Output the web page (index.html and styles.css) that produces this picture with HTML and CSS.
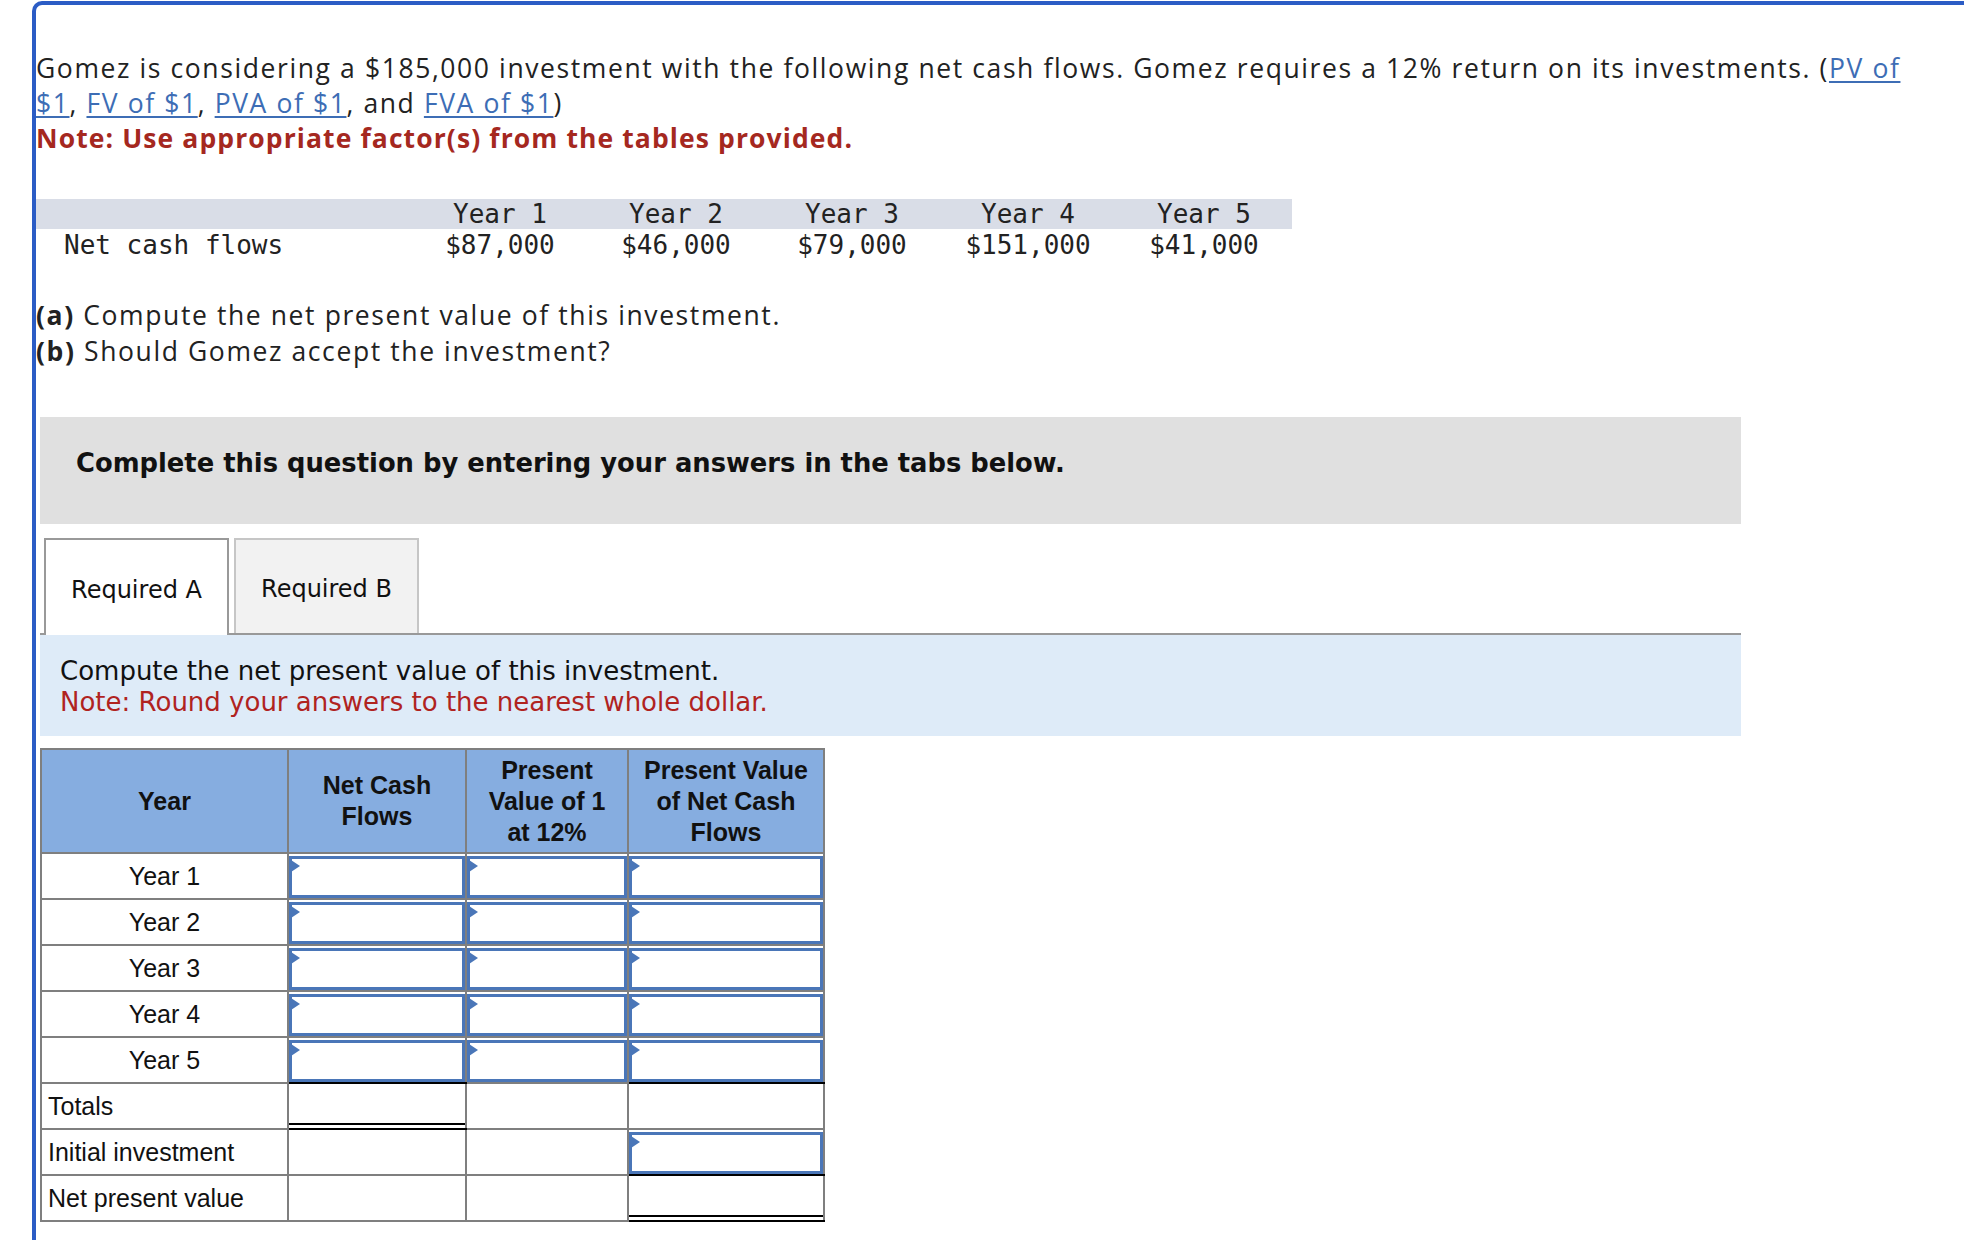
FILE: index.html
```html
<!DOCTYPE html>
<html lang="en">
<head>
<meta charset="utf-8">
<title>Gomez NPV question</title>
<link rel="stylesheet" href="styles.css">
</head>
<body>
<div class="frame">
  <p class="intro">Gomez is considering a $185,000 investment with the following net cash flows. Gomez requires a 12% return on its investments. (<a href="#">PV of</a> <a href="#">$1</a>, <a href="#">FV of $1</a>, <a href="#">PVA of $1</a>, and <a href="#">FVA of $1</a>)<br><span class="note">Note: Use appropriate factor(s) from the tables provided.</span></p>

  <table class="flows">
    <thead>
      <tr><th class="label"></th><th>Year 1</th><th>Year 2</th><th>Year 3</th><th>Year 4</th><th>Year 5</th></tr>
    </thead>
    <tbody>
      <tr><td class="label">Net cash flows</td><td>$87,000</td><td>$46,000</td><td>$79,000</td><td>$151,000</td><td>$41,000</td></tr>
    </tbody>
  </table>

  <p class="parts"><b>(a)</b> Compute the net present value of this investment.<br><b>(b)</b> Should Gomez accept the investment?</p>

  <div class="instructions">Complete this question by entering your answers in the tabs below.</div>

  <div class="tabs">
    <div class="tab active">Required A</div>
    <div class="tab">Required B</div>
  </div>
  <div class="panel-note">
    <div>Compute the net present value of this investment.</div>
    <div class="red">Note: Round your answers to the nearest whole dollar.</div>
  </div>

  <table class="npv">
    <colgroup><col class="c1"><col class="c2"><col class="c3"><col class="c4"></colgroup>
    <thead>
      <tr><th>Year</th><th>Net Cash Flows</th><th>Present Value of 1 at 12%</th><th>Present Value of Net Cash Flows</th></tr>
    </thead>
    <tbody>
      <tr><td class="yr">Year 1</td><td class="in"><div class="box"></div></td><td class="in"><div class="box"></div></td><td class="in"><div class="box"></div></td></tr>
      <tr><td class="yr">Year 2</td><td class="in"><div class="box"></div></td><td class="in"><div class="box"></div></td><td class="in"><div class="box"></div></td></tr>
      <tr><td class="yr">Year 3</td><td class="in"><div class="box"></div></td><td class="in"><div class="box"></div></td><td class="in"><div class="box"></div></td></tr>
      <tr><td class="yr">Year 4</td><td class="in"><div class="box"></div></td><td class="in"><div class="box"></div></td><td class="in"><div class="box"></div></td></tr>
      <tr><td class="yr">Year 5</td><td class="in sum"><div class="box"></div></td><td class="in"><div class="box"></div></td><td class="in sum"><div class="box"></div></td></tr>
      <tr><td class="lbl">Totals</td><td class="dbl"></td><td></td><td></td></tr>
      <tr><td class="lbl">Initial investment</td><td></td><td></td><td class="in sum"><div class="box"></div></td></tr>
      <tr><td class="lbl">Net present value</td><td></td><td></td><td class="dbl"></td></tr>
    </tbody>
  </table>
</div>
</body>
</html>
```
FILE: styles.css
```css
html, body {
  margin: 0;
  padding: 0;
  background: #fff;
}

.frame {
  margin: 1px 0 0 32px;
  border-top: 4px solid #2b5cc5;
  border-left: 4px solid #2b5cc5;
  border-top-left-radius: 10px;
  min-height: 1240px;
  padding-top: 46px;
  color: #222;
}

.intro {
  margin: 0;
  max-width: 1890px;
  font-family: "Open Sans", "Liberation Sans", sans-serif;
  font-size: 26.5px;
  line-height: 35px;
  letter-spacing: 1.6px;
}

.intro a {
  color: #3d6db5;
  text-decoration: underline;
  text-underline-offset: 3px;
}

.note {
  color: #a5281f;
  font-weight: bold;
  letter-spacing: 1.1px;
}

.flows {
  margin-top: 43px;
  border-collapse: collapse;
  font-family: "DejaVu Sans Mono", monospace;
  font-size: 26px;
  color: #222;
}

.flows th,
.flows td {
  padding: 0;
  width: 176px;
  text-align: center;
  font-weight: normal;
  white-space: nowrap;
}

.flows th.label,
.flows td.label {
  width: 348px;
  padding-left: 28px;
  text-align: left;
}

.flows thead tr {
  background: #d9dde7;
}

.flows th {
  height: 29px;
}

.flows td {
  height: 31px;
}

.parts {
  margin: 37px 0 0;
  font-family: "Open Sans", "Liberation Sans", sans-serif;
  font-size: 26.5px;
  line-height: 36px;
  letter-spacing: 1.6px;
}

.instructions {
  margin: 48px 0 0 4px;
  width: 1665px;
  padding: 30px 0 45px 36px;
  background: #e0e0e0;
  font-family: "DejaVu Sans", sans-serif;
  font-weight: bold;
  font-size: 25.8px;
  line-height: 32px;
  color: #111;
}

.tabs {
  margin: 14px 0 0 4px;
  width: 1701px;
  display: flex;
  gap: 5px;
  padding-left: 4px;
  box-sizing: border-box;
  border-bottom: 2px solid #999;
}

.tab {
  width: 185px;
  height: 95px;
  box-sizing: border-box;
  display: flex;
  align-items: center;
  justify-content: center;
  font-family: "DejaVu Sans", sans-serif;
  font-size: 24px;
  color: #111;
  background: #f2f2f2;
  border: 2px solid #c6c6c6;
  border-bottom: none;
  padding-top: 4px;
}

.tab.active {
  background: #fff;
  border-color: #999;
  height: 97px;
  margin-bottom: -2px;
}

.panel-note {
  margin-left: 4px;
  width: 1701px;
  box-sizing: border-box;
  padding: 21px 0 18px 20px;
  background: #deebf8;
  font-family: "DejaVu Sans", sans-serif;
  font-size: 26px;
  line-height: 31px;
  color: #111;
}

.panel-note .red {
  color: #b0231f;
}

.npv {
  margin: 12px 0 0 4px;
  width: 783px;
  table-layout: fixed;
  border-collapse: collapse;
  font-family: "Liberation Sans", Arial, sans-serif;
  font-size: 25px;
  color: #111;
}

.npv col.c1 { width: 247px; }
.npv col.c2 { width: 178px; }
.npv col.c3 { width: 162px; }
.npv col.c4 { width: 196px; }

.npv th,
.npv td {
  border: 2px solid #7f7f7f;
  padding: 0;
}

.npv th {
  height: 102px;
  background: #86ade0;
  font-weight: bold;
  line-height: 31px;
  padding: 0 8px;
  text-align: center;
  vertical-align: middle;
}

.npv td {
  height: 44px;
  vertical-align: top;
}

.npv td.yr {
  text-align: center;
  vertical-align: middle;
}

.npv td.lbl {
  padding-left: 6px;
  vertical-align: middle;
}

.npv td.in {
  height: 42px;
  padding-top: 2px;
}

.box {
  position: relative;
  height: 42px;
  box-sizing: border-box;
  border: 3px solid #4a76b8;
  background: #fff;
}

.box::before {
  content: "";
  position: absolute;
  left: -1px;
  top: 1px;
  border-left: 9px solid #4a76b8;
  border-top: 6px solid transparent;
  border-bottom: 6px solid transparent;
}

.npv td.sum {
  border-bottom-color: #000;
}

.npv td.dbl {
  border-bottom-color: #000;
  box-shadow: inset 0 -3px 0 #fff, inset 0 -5px 0 #000;
}
```
